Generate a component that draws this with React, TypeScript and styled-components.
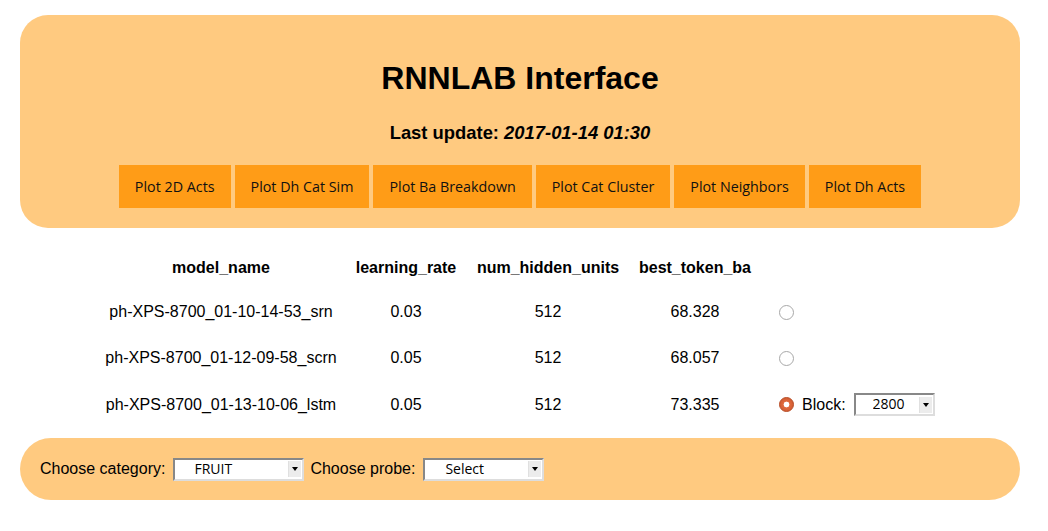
import React from "react";
import styled, { createGlobalStyle } from "styled-components";

const Global = createGlobalStyle`
  html, body { margin: 0; padding: 0; background: #ffffff; }
  body { font-family: "Liberation Sans", Arial, sans-serif; color: #000; }
`;

const Page = styled.div`
  padding: 15px 28px 0 20px;
  width: 1000px;
`;

const HeaderPanel = styled.header`
  background: #ffca80;
  border-radius: 28px;
  height: 213px;
  box-sizing: border-box;
  padding-top: 45px;
  display: flex;
  flex-direction: column;
  align-items: center;
`;

const Title = styled.h1`
  margin: 0;
  font-size: 32px;
  line-height: 36px;
  font-weight: bold;
`;

const Updated = styled.h3`
  margin: 26px 0 0;
  font-size: 18.4px;
  line-height: 22px;
  font-weight: bold;
  em { font-style: italic; }
`;

const ButtonRow = styled.div`
  display: flex;
  gap: 4px;
  margin-top: 21px;
`;

const PlotButton = styled.button`
  height: 43px;
  padding: 0 16px;
  border: none;
  background: #ff9c17;
  color: #111;
  font-family: "Open Sans", "Noto Sans", sans-serif;
  font-size: 14.3px;
  cursor: pointer;
`;

const Table = styled.table`
  border-collapse: collapse;
  margin: 18px 0 0 76px;
  table-layout: fixed;
`;

const Th = styled.th<{ $w: number }>`
  width: ${(p) => p.$w}px;
  height: 43px;
  padding: 0;
  font-size: 16px;
  font-weight: bold;
  text-align: center;
`;

const Td = styled.td<{ $left?: boolean; $h?: number }>`
  height: ${(p) => p.$h ?? 46}px;
  padding: 0 0 0 ${(p) => (p.$left ? 18 : 0)}px;
  font-size: 16px;
  text-align: ${(p) => (p.$left ? "left" : "center")};
  vertical-align: middle;
`;

const ChoiceCell = styled.div`
  display: flex;
  align-items: center;
  gap: 8px;
`;

const Radio = styled.input.attrs({ type: "radio" })`
  appearance: none;
  margin: 0 0 0 1px;
  width: 15px;
  height: 15px;
  border-radius: 50%;
  border: 1px solid #a8a8a8;
  background: #fff;
  box-sizing: border-box;
  &:checked {
    border: 1px solid #b8502a;
    background: radial-gradient(circle at 50% 50%, #ffffff 0 2.6px, #e06a3e 3.2px, #c9532a 100%);
  }
`;

const Label = styled.span`
  font-size: 16px;
`;

const SelectBox = styled.div<{ $w: number; $ml?: number; $mr?: number }>`
  display: inline-flex;
  align-items: center;
  width: ${(p) => p.$w}px;
  height: 23px;
  margin: 0 ${(p) => p.$mr ?? 0}px 0 ${(p) => p.$ml ?? 0}px;
  box-sizing: border-box;
  border: 2px solid;
  border-color: #888 #ddd #ddd #888;
  background: #fff;
`;

const NativeSelect = styled.select<{ $pad: number }>`
  appearance: none;
  flex: 1;
  min-width: 0;
  height: 19px;
  line-height: 17px;
  border: none;
  outline: none;
  background: transparent;
  padding: 0 0 2px ${(p) => p.$pad}px;
  font-family: "Open Sans", "Noto Sans", sans-serif;
  font-size: 14px;
  color: #000;
`;

const Arrow = styled.span`
  width: 12px;
  height: 16px;
  margin-right: 1px;
  background: #ececec;
  border-left: 1px solid #e0e0e0;
  display: flex;
  align-items: center;
  justify-content: center;
  &::after {
    content: "";
    border-left: 3px solid transparent;
    border-right: 3px solid transparent;
    border-top: 4px solid #000;
  }
`;

const FooterPanel = styled.footer`
  margin-top: 10px;
  background: #ffca80;
  border-radius: 31px;
  height: 62px;
  box-sizing: border-box;
  padding-left: 20px;
  display: flex;
  align-items: center;
`;

const buttons = [
  "Plot 2D Acts",
  "Plot Dh Cat Sim",
  "Plot Ba Breakdown",
  "Plot Cat Cluster",
  "Plot Neighbors",
  "Plot Dh Acts",
];

const rows = [
  { name: "ph-XPS-8700_01-10-14-53_srn", lr: "0.03", h: "512", ba: "68.328", sel: false },
  { name: "ph-XPS-8700_01-12-09-58_scrn", lr: "0.05", h: "512", ba: "68.057", sel: false },
  { name: "ph-XPS-8700_01-13-10-06_lstm", lr: "0.05", h: "512", ba: "73.335", sel: true },
];

function Dropdown({
  w,
  pad,
  value,
  ml,
  mr,
}: {
  w: number;
  pad: number;
  value: string;
  ml?: number;
  mr?: number;
}) {
  return (
    <SelectBox $w={w} $ml={ml} $mr={mr}>
      <NativeSelect $pad={pad} defaultValue={value}>
        <option value={value}>{value}</option>
      </NativeSelect>
      <Arrow />
    </SelectBox>
  );
}

export default function App() {
  return (
    <>
      <Global />
      <Page>
        <HeaderPanel>
          <Title>RNNLAB Interface</Title>
          <Updated>
            Last update: <em>2017-01-14 01:30</em>
          </Updated>
          <ButtonRow>
            {buttons.map((b) => (
              <PlotButton key={b}>{b}</PlotButton>
            ))}
          </ButtonRow>
        </HeaderPanel>
        <Table>
          <thead>
            <tr>
              <Th $w={250}>model_name</Th>
              <Th $w={120}>learning_rate</Th>
              <Th $w={164}>num_hidden_units</Th>
              <Th $w={130}>best_token_ba</Th>
              <Th $w={200}></Th>
            </tr>
          </thead>
          <tbody>
            {rows.map((r, i) => (
              <tr key={r.name}>
                <Td $h={i === 2 ? 47 : 46}>{r.name}</Td>
                <Td>{r.lr}</Td>
                <Td>{r.h}</Td>
                <Td>{r.ba}</Td>
                <Td $left>
                  <ChoiceCell>
                    <Radio name="model" defaultChecked={r.sel} />
                    {r.sel && (
                      <>
                        <Label>Block:</Label>
                        <Dropdown w={81} pad={17} value="2800" />
                      </>
                    )}
                  </ChoiceCell>
                </Td>
              </tr>
            ))}
          </tbody>
        </Table>
        <FooterPanel>
          <Label>Choose category:</Label>
          <Dropdown w={131} pad={19} value="FRUIT" ml={8} mr={6} />
          <Label>Choose probe:</Label>
          <Dropdown w={121} pad={20} value="Select" ml={8} />
        </FooterPanel>
      </Page>
    </>
  );
}
